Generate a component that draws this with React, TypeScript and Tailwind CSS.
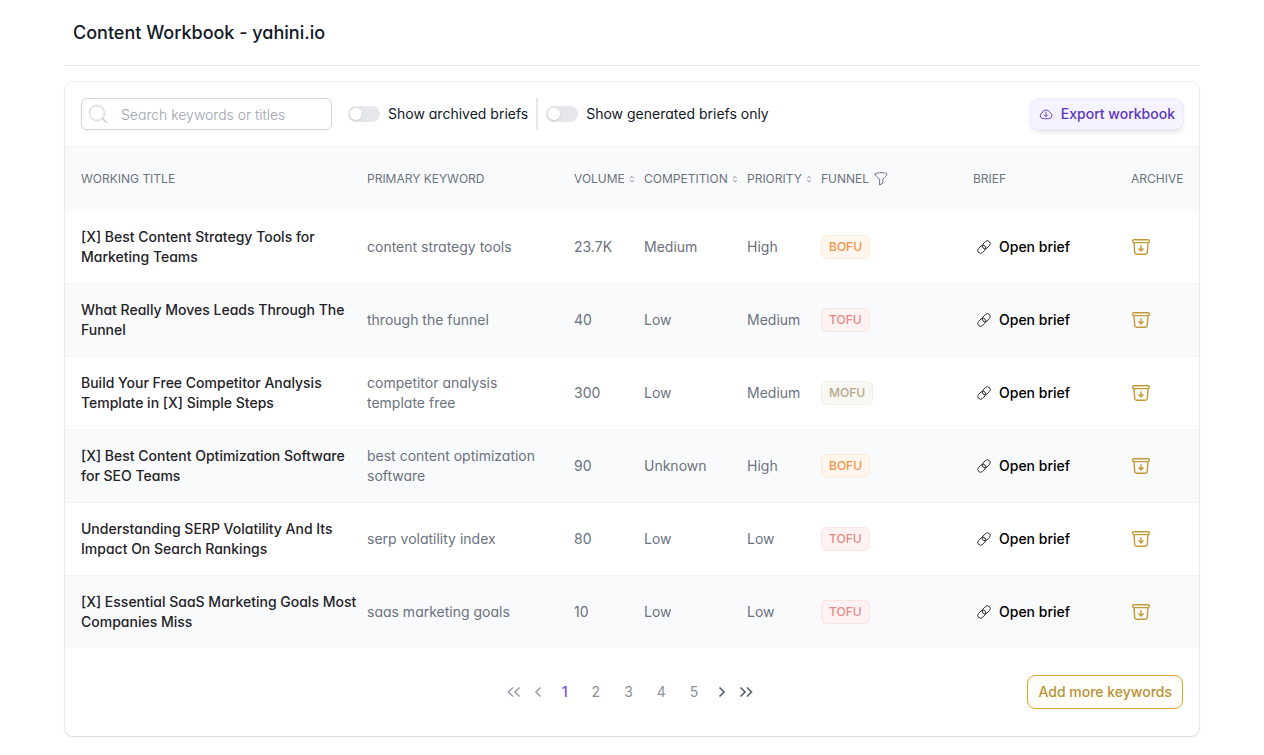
import type { ReactNode } from 'react'

type Funnel = 'BOFU' | 'MOFU' | 'TOFU'

interface Brief {
  title: string
  keyword: string
  volume: string
  competition: string
  priority: string
  funnel: Funnel
}

const BRIEFS: Brief[] = [
  {
    title: '[X] Best Content Strategy Tools for Marketing Teams',
    keyword: 'content strategy tools',
    volume: '23.7K',
    competition: 'Medium',
    priority: 'High',
    funnel: 'BOFU',
  },
  {
    title: 'What Really Moves Leads Through The Funnel',
    keyword: 'through the funnel',
    volume: '40',
    competition: 'Low',
    priority: 'Medium',
    funnel: 'TOFU',
  },
  {
    title: 'Build Your Free Competitor Analysis Template in [X] Simple Steps',
    keyword: 'competitor analysis template free',
    volume: '300',
    competition: 'Low',
    priority: 'Medium',
    funnel: 'MOFU',
  },
  {
    title: '[X] Best Content Optimization Software for SEO Teams',
    keyword: 'best content optimization software',
    volume: '90',
    competition: 'Unknown',
    priority: 'High',
    funnel: 'BOFU',
  },
  {
    title: 'Understanding SERP Volatility And Its Impact On Search Rankings',
    keyword: 'serp volatility index',
    volume: '80',
    competition: 'Low',
    priority: 'Low',
    funnel: 'TOFU',
  },
  {
    title: '[X] Essential SaaS Marketing Goals Most Companies Miss',
    keyword: 'saas marketing goals',
    volume: '10',
    competition: 'Low',
    priority: 'Low',
    funnel: 'TOFU',
  },
]

const FUNNEL_STYLES: Record<Funnel, string> = {
  BOFU: 'bg-[#fff7ed] border-[#fdebd6] text-[#f59149]',
  MOFU: 'bg-[#f8f7f3] border-[#f0eee6] text-[#b5a789]',
  TOFU: 'bg-[#fef3f2] border-[#fce5e3] text-[#e58a86]',
}

function SearchIcon() {
  return (
    <svg className="size-5" viewBox="0 0 20 20" fill="none" strokeLinecap="round" aria-hidden="true">
      <circle cx="9" cy="9" r="7.5" stroke="#e2e3e8" strokeWidth="1.8" />
      <path d="M14.5 14.5l3.700 3.700" stroke="#cfcfd6" strokeWidth="1.8" />
    </svg>
  )
}

function CloudDownloadIcon() {
  return (
    <svg className="size-3.5" viewBox="0 0 14 14" fill="none" stroke="currentColor" strokeWidth="0.9" strokeLinecap="round" strokeLinejoin="round" aria-hidden="true">
      <path d="M3.8 11.6a2.9 2.9 0 0 1-.7-5.6 4.1 4.1 0 0 1 7.8-.4 3.1 3.1 0 0 1-.6 6z" />
      <path d="M7 5v4.4M5.3 7.9L7 9.6l1.7-1.7" />
    </svg>
  )
}

function FilterIcon() {
  return (
    <svg className="size-4" viewBox="0 0 16 16" fill="none" stroke="currentColor" strokeWidth="1" strokeLinecap="round" strokeLinejoin="round" aria-hidden="true">
      <path d="M2 3.2C1.500 2.500 4 1.700 8 1.700s6.500.800 6 1.500c-.5 1.300-1.500 2.500-4.200 4.900v4.100L6.600 14V8.100C3.800 5.800 2.500 4.500 2 3.200z" />
    </svg>
  )
}

function SortIcon() {
  return (
    <svg className="h-2 w-1.5" viewBox="0 0 6 8" fill="none" stroke="currentColor" strokeWidth="0.8" aria-hidden="true">
      <path d="M1.200 3.200L3 1.400l1.800 1.800M1.200 5.200L3 7l1.800-1.800" />
    </svg>
  )
}

function LinkIcon() {
  return (
    <svg className="size-3.5" viewBox="0 0 14 14" fill="none" stroke="#27272a" strokeWidth="0.9" aria-hidden="true">
      <rect x="-0.600" y="4.200" width="9" height="5.600" rx="2.800" transform="rotate(-45 7 7)" />
      <rect x="5.600" y="4.200" width="9" height="5.600" rx="2.800" transform="rotate(-45 7 7)" />
    </svg>
  )
}

function ArchiveIcon() {
  return (
    <svg className="h-4 w-5" viewBox="0 0 20 16" fill="none" stroke="currentColor" strokeWidth="1.400" strokeLinecap="round" strokeLinejoin="round" aria-hidden="true">
      <rect x="1.700" y="0.800" width="16.600" height="2.800" rx="1" />
      <path d="M3 3.600l.7 9.800a2 2 0 0 0 2 1.800h8.600a2 2 0 0 0 2-1.800l.7-9.800M10 6.800v5M7.900 9.800l2.100 2.100 2.100-2.100" />
    </svg>
  )
}

function Toggle({ label }: { label: string }) {
  return (
    <label className="flex cursor-pointer items-center gap-2 px-2 text-sm text-[#111827]">
      <input type="checkbox" className="peer sr-only" />
      <span className="flex h-4 w-8 items-center rounded-full bg-[#e5e7eb] p-0.5 peer-checked:justify-end peer-checked:bg-violet-500">
        <span className="size-3 rounded-full bg-white shadow-sm" />
      </span>
      {label}
    </label>
  )
}

function SortableHeader({ children }: { children: ReactNode }) {
  return (
    <th scope="col" className="font-normal">
      <button type="button" className="flex items-center gap-1 uppercase">
        {children}
        <SortIcon />
      </button>
    </th>
  )
}

function PageArrow({ label, double, flip, muted }: { label: string; double?: boolean; flip?: boolean; muted?: boolean }) {
  return (
    <button
      type="button"
      aria-label={label}
      disabled={muted}
      className={`flex h-8 w-6 items-center justify-center ${muted ? 'text-[#a1a1aa]' : 'text-[#5b6270]'}`}
    >
      <svg
        className={`h-3 w-3.5 ${flip ? '-scale-x-100' : ''}`}
        viewBox="0 0 14 12"
        fill="none"
        stroke="currentColor"
        strokeWidth="1.700"
        aria-hidden="true"
      >
        <path d={double ? 'M1.500 1.500L6 6l-4.500 4.500M8 1.500L12.500 6 8 10.500' : 'M4.500 1.500L9 6l-4.500 4.500'} />
      </svg>
    </button>
  )
}

export default function App() {
  return (
    <main className="min-h-screen bg-white px-[65px] pb-4 font-['Inter',sans-serif] text-sm text-[#111827] [font-feature-settings:'cv11']">
      <header className="border-b border-[#e5e7eb] px-2 pt-[19px] pb-[18px]">
        <h1 className="text-lg font-medium">Content Workbook - yahini.io</h1>
      </header>

      <section className="mt-4 rounded-lg bg-white shadow-sm ring-1 ring-black/5">
        <div className="flex items-center px-4 py-4">
          <div className="relative mr-2 w-[251px]">
            <span className="pointer-events-none absolute inset-y-0 left-[7px] flex items-center">
              <SearchIcon />
            </span>
            <input
              type="text"
              aria-label="Search keywords or titles"
              placeholder="Search keywords or titles"
              className="h-8 w-full rounded-md border border-[#d1d5db] pr-3 pl-[39px] text-sm font-light shadow-xs placeholder:text-[#9ca3af]"
            />
          </div>
          <div className="flex h-8 divide-x-2 divide-[#e5e7eb]">
            <Toggle label="Show archived briefs" />
            <Toggle label="Show generated briefs only" />
          </div>
          <button
            type="button"
            className="ml-auto flex h-[30px] items-center gap-2 rounded-lg bg-[#f5f3ff] px-2 text-sm font-medium text-[#5b35c0] shadow-md ring-1 ring-[#ede9fe]"
          >
            <CloudDownloadIcon />
            Export workbook
          </button>
        </div>

        <table className="w-full table-fixed text-left">
          <colgroup>
            <col className="w-[302px]" />
            <col className="w-[207px]" />
            <col className="w-[70px]" />
            <col className="w-[103px]" />
            <col className="w-[74px]" />
            <col className="w-[152px]" />
            <col className="w-[158px]" />
            <col className="w-[68px]" />
          </colgroup>
          <thead>
            <tr className="h-16 border-t border-[#f3f4f6] bg-[#f9fafb] text-xs text-[#6b7280] uppercase">
              <th scope="col" className="pl-4 font-normal">Working title</th>
              <th scope="col" className="font-normal">Primary keyword</th>
              <SortableHeader>Volume</SortableHeader>
              <SortableHeader>Competition</SortableHeader>
              <SortableHeader>Priority</SortableHeader>
              <th scope="col" className="font-normal">
                <button type="button" className="flex items-center gap-1 uppercase">
                  Funnel
                  <FilterIcon />
                </button>
              </th>
              <th scope="col" className="font-normal">Brief</th>
              <th scope="col" className="font-normal">Archive</th>
            </tr>
          </thead>
          <tbody>
            {BRIEFS.map((brief) => (
              <tr key={brief.keyword} className="h-[73px] border-b border-[#f3f4f6] text-[#6b7280] last:h-[72px] last:border-b-0 even:bg-[#f9fafb]">
                <td className="pr-2 pl-4 font-medium text-[#1f2328]">{brief.title}</td>
                <td className="pr-8">{brief.keyword}</td>
                <td>{brief.volume}</td>
                <td>{brief.competition}</td>
                <td>{brief.priority}</td>
                <td>
                  <span className={`inline-flex h-6 items-center rounded-md border px-[7px] text-xs font-medium ${FUNNEL_STYLES[brief.funnel]}`}>
                    {brief.funnel}
                  </span>
                </td>
                <td>
                  <a href="#brief" className="flex items-center gap-2 pl-1 font-medium text-black">
                    <LinkIcon />
                    Open brief
                  </a>
                </td>
                <td>
                  <button type="button" aria-label={`Archive ${brief.keyword}`} className="flex text-[#c49a37]">
                    <ArchiveIcon />
                  </button>
                </td>
              </tr>
            ))}
          </tbody>
        </table>

        <footer className="grid grid-cols-[1fr_auto_1fr] items-center px-4 py-[27px]">
          <nav aria-label="Pagination" className="col-start-2 flex items-center pr-1">
            <PageArrow label="First page" double flip muted />
            <PageArrow label="Previous page" flip muted />
            <button type="button" aria-current="page" className="px-3 font-semibold text-[#8464e4]">1</button>
            {[2, 3, 4, 5].map((page) => (
              <button key={page} type="button" className="px-3 text-[#8a909c]">
                {page}
              </button>
            ))}
            <PageArrow label="Next page" />
            <PageArrow label="Last page" double />
          </nav>
          <button
            type="button"
            className="h-[34px] justify-self-end rounded-lg border border-[#d4a72c] bg-[#fffdf7] px-2.5 text-sm font-medium text-[#b8923a]"
          >
            Add more keywords
          </button>
        </footer>
      </section>
    </main>
  )
}
